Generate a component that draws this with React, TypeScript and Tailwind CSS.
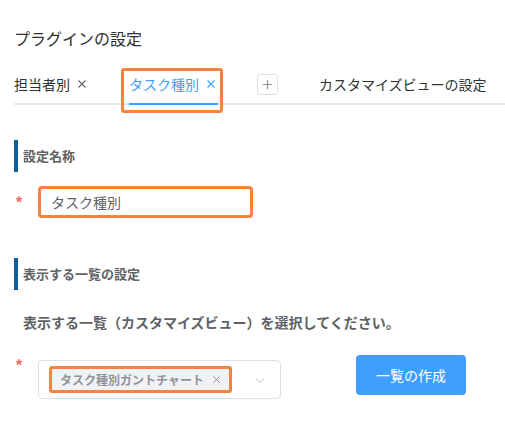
const font = { fontFamily: '"Noto Sans CJK JP", "Noto Sans", sans-serif' };

const Close = ({ className }: { className?: string }) => (
  <svg viewBox="0 0 10 10" className={className} fill="none" stroke="currentColor" strokeWidth="1.1">
    <path d="M1.5 1.5l7 7M8.5 1.5l-7 7" />
  </svg>
);

const Heading = ({ children }: { children: React.ReactNode }) => (
  <div className="flex h-[32px] items-center border-l-4 border-[#0e6299] pl-[5px] text-[13px] font-bold text-[#606266]">
    {children}
  </div>
);

const Required = ({ className }: { className?: string }) => (
  <span className={`w-[24px] shrink-0 pl-[1px] text-[16px] leading-none font-bold text-[#f56c6c] ${className ?? ""}`}>*</span>
);

export default function App() {
  return (
    <div className="min-h-[423px] w-[505px] bg-white pl-[14px] pt-[26px] text-[#303133]" style={font}>
      <h1 className="text-[16px] leading-[24px] font-normal">プラグインの設定</h1>

      {/* tabs */}
      <div className="mt-[15px] flex h-[40px] items-center border-b-2 border-[#e4e7ed] text-[14px]">
        <div className="flex h-full items-center gap-[7px]">
          <span>担当者別</span>
          <Close className="h-[10px] w-[10px] text-[#606266]" />
        </div>
        <div className="relative ml-[42px] flex h-full items-center gap-[7px] text-[#409eff]">
          <span>タスク種別</span>
          <Close className="h-[10px] w-[10px]" />
          <span className="absolute -bottom-[2px] left-0 right-[-2px] h-[2px] bg-[#409eff]" />
          <span className="absolute -left-[8px] -right-[7px] top-[3px] -bottom-[10px] rounded-[3px] border-[3px] border-[#f5843c]" />
        </div>
        <div className="ml-[41px] flex h-[21px] w-[21px] items-center justify-center rounded-[3px] border border-[#dcdfe6] text-[#909399]">
          <svg viewBox="0 0 12 12" className="h-[11px] w-[11px]" stroke="currentColor" strokeWidth="1.3">
            <path d="M6 1v10M1 6h10" />
          </svg>
        </div>
        <span className="ml-[41px]">カスタマイズビューの設定</span>
      </div>

      {/* section 1 */}
      <div className="mt-[35px]">
        <Heading>設定名称</Heading>
        <div className="mt-[14px] flex items-start">
          <Required className="pt-[8px]" />
          <div className="flex h-[32px] w-[215px] items-center rounded-[4px] border-[3px] border-[#f5843c] pl-[10px] text-[14px] text-[#606266]">
            タスク種別
          </div>
        </div>
      </div>

      {/* section 2 */}
      <div className="mt-[40px]">
        <Heading>表示する一覧の設定</Heading>
        <p className="mt-[22px] pl-[9px] text-[14px] font-bold leading-[20px] text-[#606266]">
          表示する一覧（カスタマイズビュー）を選択してください。
        </p>
        <div className="mt-[23px] flex items-start">
          <Required className="pt-[2px]" />
          <div className="mt-[5px] flex h-[39px] w-[243px] items-center rounded-[4px] border border-[#dcdfe6] pl-[10px] pr-[14px]">
            <div className="flex h-[27px] items-center gap-[8px] rounded-[3px] border-[3px] border-[#f5843c] bg-[#f0f2f5] pl-[8px] pr-[8px] text-[12px] font-bold text-[#909399]">
              <span>タスク種別ガントチャート</span>
              <Close className="h-[9px] w-[9px]" />
            </div>
            <svg viewBox="0 0 12 12" className="ml-auto h-[12px] w-[12px] text-[#c0c4cc]" fill="none" stroke="currentColor" strokeWidth="1">
              <path d="M1.5 4l4.5 4.5L10.5 4" />
            </svg>
          </div>
          <button className="ml-[75px] h-[40px] w-[110px] rounded-[4px] bg-[#409eff] text-[14px] text-white">
            一覧の作成
          </button>
        </div>
      </div>
    </div>
  );
}
